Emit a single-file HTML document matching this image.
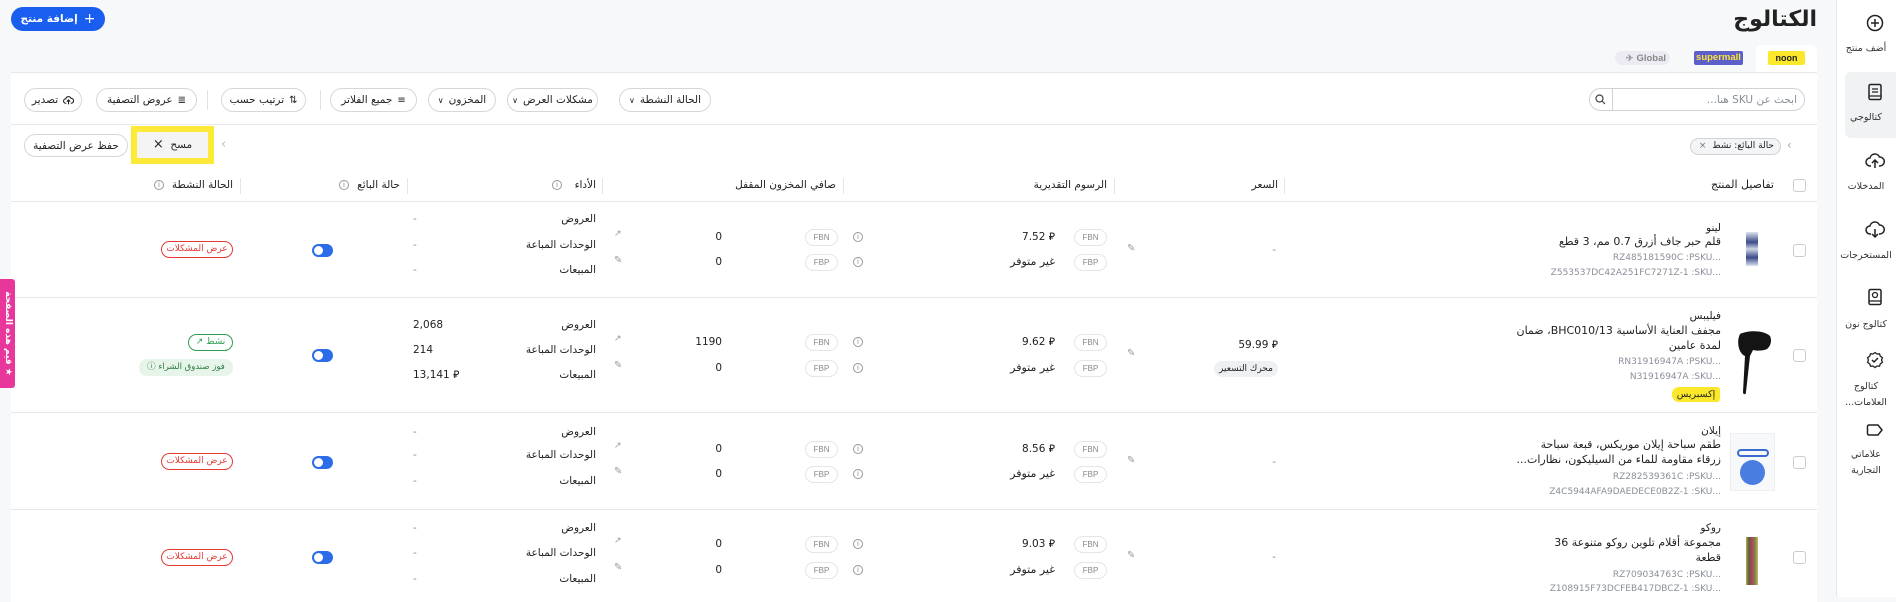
<!DOCTYPE html>
<html><head><meta charset="utf-8"><style>
*{box-sizing:border-box;margin:0;padding:0}
body{width:1896px;height:597px;overflow:hidden;background:#f7f8fa;font-family:"DejaVu Sans","Liberation Sans",sans-serif;color:#222;position:relative}
.a{position:absolute;white-space:nowrap}
.t{position:absolute;white-space:nowrap;line-height:14px;font-size:10.5px;direction:rtl}
.g{color:#8a8f98;font-size:9px}
.btn{position:absolute;height:24px;border:1px solid #d4d7dc;border-radius:12px;background:#fff;font-size:10.5px;display:flex;align-items:center;justify-content:center;gap:5px;direction:rtl;color:#222}
.badge{position:absolute;width:33px;height:17px;border:1px solid #e3e5e8;border-radius:9px;font-size:8px;color:#888;text-align:center;line-height:15px;font-family:"Liberation Sans",sans-serif}
.info{position:absolute;width:10px;height:10px;border:1px solid #999;border-radius:50%;font-size:7px;line-height:8px;text-align:center;color:#888}
.tog{position:absolute;width:21px;height:13px;border-radius:7px;background:#2b6de8}
.tog:after{content:"";position:absolute;left:2px;top:2px;width:9px;height:9px;border-radius:50%;background:#fff}
.cb{position:absolute;width:13px;height:13px;border:1px solid #c9ccd1;border-radius:3px;background:#fff}
.hl{position:absolute;height:1px;background:#e6e8eb;left:11px;width:1806px}
.vd{position:absolute;width:1px;height:16px;background:#e3e5e8}
.red{position:absolute;height:17px;border:1px solid #e53935;border-radius:9px;color:#e53935;font-size:9px;line-height:15px;text-align:center;direction:rtl}
.ic{position:absolute}
.sl{position:absolute;width:60px;left:1836px;text-align:center;font-size:9.5px;color:#333;line-height:16px;direction:rtl}
.pn{font-size:11px}
</style></head><body>

<!-- sidebar -->
<div class="a" style="left:1836px;top:0;width:60px;height:597px;background:#fff;border-left:1px solid #e6e8eb"></div>
<div class="a" style="left:1845px;top:72px;width:51px;height:66px;background:#f1f2f4;border-radius:6px 0 0 6px"></div>
<svg class="ic" style="left:1866px;top:14px" width="18" height="18" viewBox="0 0 18 18"><circle cx="9" cy="9" r="7.5" fill="none" stroke="#222" stroke-width="1.5"/><path d="M9 5v8M5 9h8" stroke="#222" stroke-width="1.5"/></svg>
<div class="sl" style="top:41px">أضف منتج</div>
<svg class="ic" style="left:1867px;top:83px" width="16" height="18" viewBox="0 0 16 18"><rect x="2" y="1.5" width="12" height="15" rx="1.5" fill="none" stroke="#222" stroke-width="1.5"/><path d="M5 6h6M5 9h6M2 13h12" stroke="#222" stroke-width="1.3"/></svg>
<div class="sl" style="top:110px">كتالوجي</div>
<svg class="ic" style="left:1865px;top:152px" width="20" height="18" viewBox="0 0 20 18"><path d="M6 14H5a4 4 0 0 1 0-8 5 5 0 0 1 9.5-1A4 4 0 0 1 15 14h-1" fill="none" stroke="#222" stroke-width="1.5"/><path d="M10 16V8M7 11l3-3 3 3" fill="none" stroke="#222" stroke-width="1.5"/></svg>
<div class="sl" style="top:179px">المدخلات</div>
<svg class="ic" style="left:1865px;top:221px" width="20" height="18" viewBox="0 0 20 18"><path d="M6 13H5a4 4 0 0 1 0-8 5 5 0 0 1 9.5-1A4 4 0 0 1 15 13h-1" fill="none" stroke="#222" stroke-width="1.5"/><path d="M10 8v8M7 13l3 3 3-3" fill="none" stroke="#222" stroke-width="1.5"/></svg>
<div class="sl" style="top:248px">المستخرجات</div>
<svg class="ic" style="left:1867px;top:288px" width="16" height="18" viewBox="0 0 16 18"><rect x="2" y="1.5" width="12" height="15" rx="1.5" fill="none" stroke="#222" stroke-width="1.5"/><circle cx="8" cy="7" r="2.5" fill="none" stroke="#222" stroke-width="1.3"/><path d="M2 13h12" stroke="#222" stroke-width="1.3"/></svg>
<div class="sl" style="top:317px">كتالوج نون</div>
<svg class="ic" style="left:1866px;top:351px" width="18" height="18" viewBox="0 0 18 18"><path d="M9 1.5l2 1.5 2.5-.2.8 2.4 2.1 1.4-.8 2.4.8 2.4-2.1 1.4-.8 2.4-2.5-.2-2 1.5-2-1.5-2.5.2-.8-2.4L1.6 11.4l.8-2.4-.8-2.4 2.1-1.4.8-2.4 2.5.2z" fill="none" stroke="#222" stroke-width="1.3"/><path d="M6 9l2 2 4-4" fill="none" stroke="#222" stroke-width="1.5"/></svg>
<div class="sl" style="top:379px">كتالوج<br>العلامات...</div>
<svg class="ic" style="left:1866px;top:423px" width="18" height="14" viewBox="0 0 18 14"><path d="M3 2h9l4 5-4 5H3a1.5 1.5 0 0 1-1.5-1.5v-7A1.5 1.5 0 0 1 3 2z" fill="none" stroke="#222" stroke-width="1.5"/></svg>
<div class="sl" style="top:447px">علاماتي<br>التجارية</div>

<!-- header -->
<div class="a" style="right:79px;top:7px;font-size:22px;font-weight:bold;direction:rtl;line-height:26px">الكتالوج</div>
<div class="a" style="left:11px;top:7px;width:94px;height:24px;border-radius:12px;background:#1a5ef0;color:#fff;font-size:10.5px;display:flex;align-items:center;justify-content:center;gap:6px;direction:rtl;font-weight:bold"><span style="font-size:14px;font-weight:normal">+</span>إضافة منتج</div>

<!-- tabs -->
<div class="a" style="left:1756px;top:45px;width:61px;height:28px;background:#fff;border-radius:6px 6px 0 0"></div>
<div class="a" style="left:1768px;top:51px;width:37px;height:14px;background:#fce82a;border-radius:2px;font-family:'Liberation Sans';font-weight:bold;font-size:9px;line-height:14px;text-align:center">noon</div>
<div class="a" style="left:1694px;top:51px;width:49px;height:14px;background:#5c5ec9;color:#ffe533;border-radius:2px;font-family:'Liberation Sans';font-weight:bold;font-size:9.5px;line-height:14px;text-align:center">supermall</div>
<div class="a" style="left:1615px;top:51px;width:55px;height:14px;background:#ecebf3;color:#888;border-radius:7px;font-family:'Liberation Sans';font-weight:bold;font-size:9.5px;line-height:14px;text-align:right;padding-right:4px"><span style="color:#999;font-size:9px;margin-right:3px">&#x2708;</span>Global</div>

<!-- card -->
<div class="a" style="left:11px;top:72px;width:1806px;height:530px;background:#fff;border-top:1px solid #e6e8eb"></div>

<!-- search -->
<div class="a" style="left:1589px;top:88px;width:216px;height:23px;border:1px solid #cfd2d7;border-radius:12px;background:#fff"></div>
<div class="a" style="left:1612px;top:89px;width:1px;height:21px;background:#cfd2d7"></div>
<svg class="ic" style="left:1595px;top:94px" width="11" height="11" viewBox="0 0 11 11"><circle cx="4.5" cy="4.5" r="3.5" fill="none" stroke="#444" stroke-width="1.2"/><path d="M7 7l3 3" stroke="#444" stroke-width="1.2"/></svg>
<div class="t g" style="right:99px;top:93px;font-size:10.5px">ابحث عن SKU هنا...</div>

<!-- filter buttons -->
<div class="btn" style="left:619px;top:88px;width:92px">الحالة النشطة <span style="font-size:8px">&#x2228;</span></div>
<div class="btn" style="left:507px;top:88px;width:91px">مشكلات العرض <span style="font-size:8px">&#x2228;</span></div>
<div class="btn" style="left:428px;top:88px;width:68px">المخزون <span style="font-size:8px">&#x2228;</span></div>
<div class="btn" style="left:330px;top:88px;width:87px"><span style="font-size:10px">&#x2261;</span>جميع الفلاتر</div>
<div class="a" style="left:320px;top:90px;width:1px;height:20px;background:#e0e2e5"></div>
<div class="btn" style="left:221px;top:88px;width:85px"><span style="font-size:10px">&#x21C5;</span>ترتيب حسب</div>
<div class="a" style="left:207px;top:90px;width:1px;height:20px;background:#e0e2e5"></div>
<div class="btn" style="left:96px;top:88px;width:101px"><span style="font-size:10px">&#x2263;</span>عروض التصفية</div>
<div class="btn" style="left:24px;top:88px;width:58px"><svg width="11" height="11" viewBox="0 0 20 18"><path d="M6 14H5a4 4 0 0 1 0-8 5 5 0 0 1 9.5-1A4 4 0 0 1 15 14h-1M10 16V8M7 11l3-3 3 3" fill="none" stroke="#222" stroke-width="2"/></svg>تصدير</div>
<div class="hl" style="top:124px"></div>

<!-- chips -->
<div class="a" style="left:1690px;top:138px;width:91px;height:17px;border:1px solid #cfd2d7;border-radius:9px;background:#f4f5f6;font-size:9px;line-height:15px;direction:rtl;padding-right:6px">حالة البائع: نشط <span style="color:#777;margin-right:3px">×</span></div>
<div class="a" style="left:1787px;top:138px;color:#aaa;font-size:12px">&#x2039;</div>
<div class="a" style="left:131px;top:126px;width:83px;height:38px;background:#fde937"></div>
<div class="a" style="left:137px;top:132px;width:71px;height:26px;background:#f4f4f4;font-size:10.5px;line-height:26px;direction:rtl;text-align:center">مسح &nbsp;<span style="font-size:13px">×</span></div>
<div class="a" style="left:221px;top:137px;color:#bbb;font-size:13px">&#x2039;</div>
<div class="btn" style="left:24px;top:134px;width:104px;height:23px">حفظ عرض التصفية</div>

<!-- table header -->
<div class="cb" style="left:1793px;top:179px"></div>
<div class="t" style="right:122px;top:178px;font-size:11px">تفاصيل المنتج</div>
<div class="vd" style="left:1284px;top:178px"></div>
<div class="t" style="right:618px;top:178px">السعر</div>
<div class="vd" style="left:1114px;top:178px"></div>
<div class="t" style="right:789px;top:178px">الرسوم التقديرية</div>
<div class="vd" style="left:843px;top:178px"></div>
<div class="t" style="right:1060px;top:178px">صافي المخزون المقفل</div>
<div class="vd" style="left:602px;top:178px"></div>
<div class="t" style="right:1300px;top:178px">الأداء</div><div class="info" style="left:552px;top:180px">i</div>
<div class="vd" style="left:407px;top:178px"></div>
<div class="t" style="right:1496px;top:178px">حالة البائع</div><div class="info" style="left:339px;top:180px">i</div>
<div class="vd" style="left:240px;top:178px"></div>
<div class="t" style="right:1663px;top:178px">الحالة النشطة</div><div class="info" style="left:154px;top:180px">i</div>
<div class="hl" style="top:201px"></div>
<div class="hl" style="top:297px"></div>
<div class="hl" style="top:412px"></div>
<div class="hl" style="top:509px"></div>

<!-- ROW 1 -->
<div class="cb" style="left:1793px;top:244px"></div>
<div class="a" style="left:1746px;top:232px;width:12px;height:34px;background:linear-gradient(#dde3ee,#3b4a8a 30%,#cfd6e4 50%,#3b4a8a 75%,#dde3ee)"></div>
<div class="t" style="right:175px;top:221px;font-size:10.5px">لينو</div>
<div class="t pn" style="right:175px;top:235px">قلم حبر جاف أزرق 0.7 مم، 3 قطع</div>
<div class="t g" style="right:175px;top:251px">...RZ485181590C :PSKU</div>
<div class="t g" style="right:175px;top:266px">...Z553537DC42A251FC7271Z-1 :SKU</div>
<div class="t" style="right:620px;top:243px;color:#888">-</div>
<div class="a" style="left:1127px;top:243px;color:#999;font-size:10px">&#x270E;</div>
<div class="badge" style="left:1074px;top:229px">FBN</div><div class="badge" style="left:1074px;top:254px">FBP</div>
<div class="t" style="right:841px;top:230px">&#x20C1; 7.52</div>
<div class="t" style="right:841px;top:255px;font-size:11px">غير متوفر</div>
<div class="info" style="left:853px;top:232px">i</div><div class="info" style="left:853px;top:257px">i</div>
<div class="badge" style="left:805px;top:229px">FBN</div><div class="badge" style="left:805px;top:254px">FBP</div>
<div class="t" style="right:1174px;top:230px">0</div><div class="t" style="right:1174px;top:255px">0</div>
<div class="a" style="left:614px;top:229px;color:#999;font-size:9px">&#x2197;</div><div class="a" style="left:614px;top:255px;color:#999;font-size:10px">&#x270E;</div>
<div class="t" style="right:1300px;top:212px">العروض</div>
<div class="t" style="right:1300px;top:238px">الوحدات المباعة</div>
<div class="t" style="right:1300px;top:263px">المبيعات</div>
<div class="t" style="left:413px;top:212px;color:#888">-</div><div class="t" style="left:413px;top:238px;color:#888">-</div><div class="t" style="left:413px;top:263px;color:#888">-</div>
<div class="tog" style="left:312px;top:244px"></div>
<div class="red" style="left:161px;top:241px;width:72px">عرض المشكلات</div>

<!-- ROW 2 -->
<div class="cb" style="left:1793px;top:349px"></div>
<svg class="ic" style="left:1734px;top:328px" width="38" height="70" viewBox="0 0 38 70"><path d="M6 6c8-4 24-4 30 2 2 4 1 10-3 13-4 2-10 2-14 1l-3 6-4 36c0 3-3 3-3 0l2-36C5 26 2 14 6 6z" fill="#141414"/></svg>
<div class="t" style="right:175px;top:309px;font-size:10.5px">فيليبس</div>
<div class="t pn" style="right:175px;top:324px">مجفف العناية الأساسية BHC010/13، ضمان</div>
<div class="t pn" style="right:175px;top:339px">لمدة عامين</div>
<div class="t g" style="right:175px;top:355px">...RN31916947A :PSKU</div>
<div class="t g" style="right:175px;top:370px">...N31916947A :SKU</div>
<div class="a" style="left:1672px;top:387px;width:48px;height:15px;background:#fce82a;border-radius:7px 3px 3px 7px;font-size:9.5px;line-height:15px;text-align:center;direction:rtl">إكسبريس</div>
<div class="t" style="right:618px;top:338px">&#x20C1; 59.99</div>
<div class="a" style="left:1214px;top:361px;width:64px;height:16px;background:#eef0f2;border-radius:8px;font-size:9px;line-height:16px;text-align:center;direction:rtl">محرك التسعير</div>
<div class="a" style="left:1127px;top:348px;color:#999;font-size:10px">&#x270E;</div>
<div class="badge" style="left:1074px;top:334px">FBN</div><div class="badge" style="left:1074px;top:360px">FBP</div>
<div class="t" style="right:841px;top:335px">&#x20C1; 9.62</div>
<div class="t" style="right:841px;top:361px;font-size:11px">غير متوفر</div>
<div class="info" style="left:853px;top:337px">i</div><div class="info" style="left:853px;top:363px">i</div>
<div class="badge" style="left:805px;top:334px">FBN</div><div class="badge" style="left:805px;top:360px">FBP</div>
<div class="t" style="right:1174px;top:335px">1190</div><div class="t" style="right:1174px;top:361px">0</div>
<div class="a" style="left:614px;top:334px;color:#999;font-size:9px">&#x2197;</div><div class="a" style="left:614px;top:360px;color:#999;font-size:10px">&#x270E;</div>
<div class="t" style="right:1300px;top:318px">العروض</div>
<div class="t" style="right:1300px;top:343px">الوحدات المباعة</div>
<div class="t" style="right:1300px;top:368px">المبيعات</div>
<div class="t" style="left:413px;top:318px">2,068</div><div class="t" style="left:413px;top:343px">214</div><div class="t" style="left:413px;top:368px">&#x20C1; 13,141</div>
<div class="tog" style="left:312px;top:349px"></div>
<div class="a" style="left:188px;top:334px;width:45px;height:17px;border:1px solid #2e9e4f;border-radius:9px;color:#2e9e4f;font-size:9px;line-height:15px;text-align:center;direction:rtl">نشط &#x2197;</div>
<div class="a" style="left:139px;top:359px;width:94px;height:17px;background:#e6f4ea;border-radius:8px;color:#2e7d40;font-size:8.5px;line-height:17px;text-align:center;direction:rtl">فوز صندوق الشراء &#x24D8;</div>

<!-- ROW 3 -->
<div class="cb" style="left:1793px;top:456px"></div>
<div class="a" style="left:1730px;top:433px;width:45px;height:58px;background:#f7f8fa;border:1px solid #eee"></div>
<div class="a" style="left:1740px;top:460px;width:25px;height:25px;border-radius:50%;background:#4a7de0"></div>
<div class="a" style="left:1737px;top:449px;width:32px;height:8px;border:2px solid #3a6bd0;border-radius:5px"></div>
<div class="t" style="right:175px;top:424px;font-size:10.5px">إيلان</div>
<div class="t pn" style="right:175px;top:438px">طقم سباحة إيلان موريكس، قبعة سباحة</div>
<div class="t pn" style="right:175px;top:453px">زرقاء مقاومة للماء من السيليكون، نظارات...</div>
<div class="t g" style="right:175px;top:470px">...RZ282539361C :PSKU</div>
<div class="t g" style="right:175px;top:485px">...Z4C5944AFA9DAEDECE0B2Z-1 :SKU</div>
<div class="t" style="right:620px;top:455px;color:#888">-</div>
<div class="a" style="left:1127px;top:455px;color:#999;font-size:10px">&#x270E;</div>
<div class="badge" style="left:1074px;top:441px">FBN</div><div class="badge" style="left:1074px;top:466px">FBP</div>
<div class="t" style="right:841px;top:442px">&#x20C1; 8.56</div>
<div class="t" style="right:841px;top:467px;font-size:11px">غير متوفر</div>
<div class="info" style="left:853px;top:444px">i</div><div class="info" style="left:853px;top:469px">i</div>
<div class="badge" style="left:805px;top:441px">FBN</div><div class="badge" style="left:805px;top:466px">FBP</div>
<div class="t" style="right:1174px;top:442px">0</div><div class="t" style="right:1174px;top:467px">0</div>
<div class="a" style="left:614px;top:441px;color:#999;font-size:9px">&#x2197;</div><div class="a" style="left:614px;top:466px;color:#999;font-size:10px">&#x270E;</div>
<div class="t" style="right:1300px;top:425px">العروض</div>
<div class="t" style="right:1300px;top:448px">الوحدات المباعة</div>
<div class="t" style="right:1300px;top:474px">المبيعات</div>
<div class="t" style="left:413px;top:425px;color:#888">-</div><div class="t" style="left:413px;top:448px;color:#888">-</div><div class="t" style="left:413px;top:474px;color:#888">-</div>
<div class="tog" style="left:312px;top:456px"></div>
<div class="red" style="left:161px;top:453px;width:72px">عرض المشكلات</div>

<!-- ROW 4 -->
<div class="cb" style="left:1793px;top:551px"></div>
<div class="a" style="left:1746px;top:537px;width:12px;height:48px;background:linear-gradient(90deg,#c9a24a,#3e6b3c,#c36,#6a8f3c,#d4b070)"></div>
<div class="t" style="right:175px;top:521px;font-size:10.5px">روكو</div>
<div class="t pn" style="right:175px;top:536px">مجموعة أقلام تلوين روكو متنوعة 36</div>
<div class="t pn" style="right:175px;top:551px">قطعة</div>
<div class="t g" style="right:175px;top:568px">...RZ709034763C :PSKU</div>
<div class="t g" style="right:175px;top:582px">...Z108915F73DCFEB417DBCZ-1 :SKU</div>
<div class="t" style="right:620px;top:550px;color:#888">-</div>
<div class="a" style="left:1127px;top:550px;color:#999;font-size:10px">&#x270E;</div>
<div class="badge" style="left:1074px;top:536px">FBN</div><div class="badge" style="left:1074px;top:562px">FBP</div>
<div class="t" style="right:841px;top:537px">&#x20C1; 9.03</div>
<div class="t" style="right:841px;top:563px;font-size:11px">غير متوفر</div>
<div class="info" style="left:853px;top:539px">i</div><div class="info" style="left:853px;top:565px">i</div>
<div class="badge" style="left:805px;top:536px">FBN</div><div class="badge" style="left:805px;top:562px">FBP</div>
<div class="t" style="right:1174px;top:537px">0</div><div class="t" style="right:1174px;top:563px">0</div>
<div class="a" style="left:614px;top:536px;color:#999;font-size:9px">&#x2197;</div><div class="a" style="left:614px;top:562px;color:#999;font-size:10px">&#x270E;</div>
<div class="t" style="right:1300px;top:521px">العروض</div>
<div class="t" style="right:1300px;top:546px">الوحدات المباعة</div>
<div class="t" style="right:1300px;top:572px">المبيعات</div>
<div class="t" style="left:413px;top:521px;color:#888">-</div><div class="t" style="left:413px;top:546px;color:#888">-</div><div class="t" style="left:413px;top:572px;color:#888">-</div>
<div class="tog" style="left:312px;top:551px"></div>
<div class="red" style="left:161px;top:549px;width:72px">عرض المشكلات</div>

<!-- feedback tab -->
<div class="a" style="left:0;top:279px;width:15px;height:109px;background:#e8379a;border-radius:0 3px 3px 0"></div>
<div class="a" style="left:-40px;top:326px;width:95px;height:15px;transform:rotate(90deg);color:#fff;font-size:9px;line-height:15px;text-align:center;direction:rtl;font-weight:bold">★ قيم هذه الصفحة</div>
</body></html>
